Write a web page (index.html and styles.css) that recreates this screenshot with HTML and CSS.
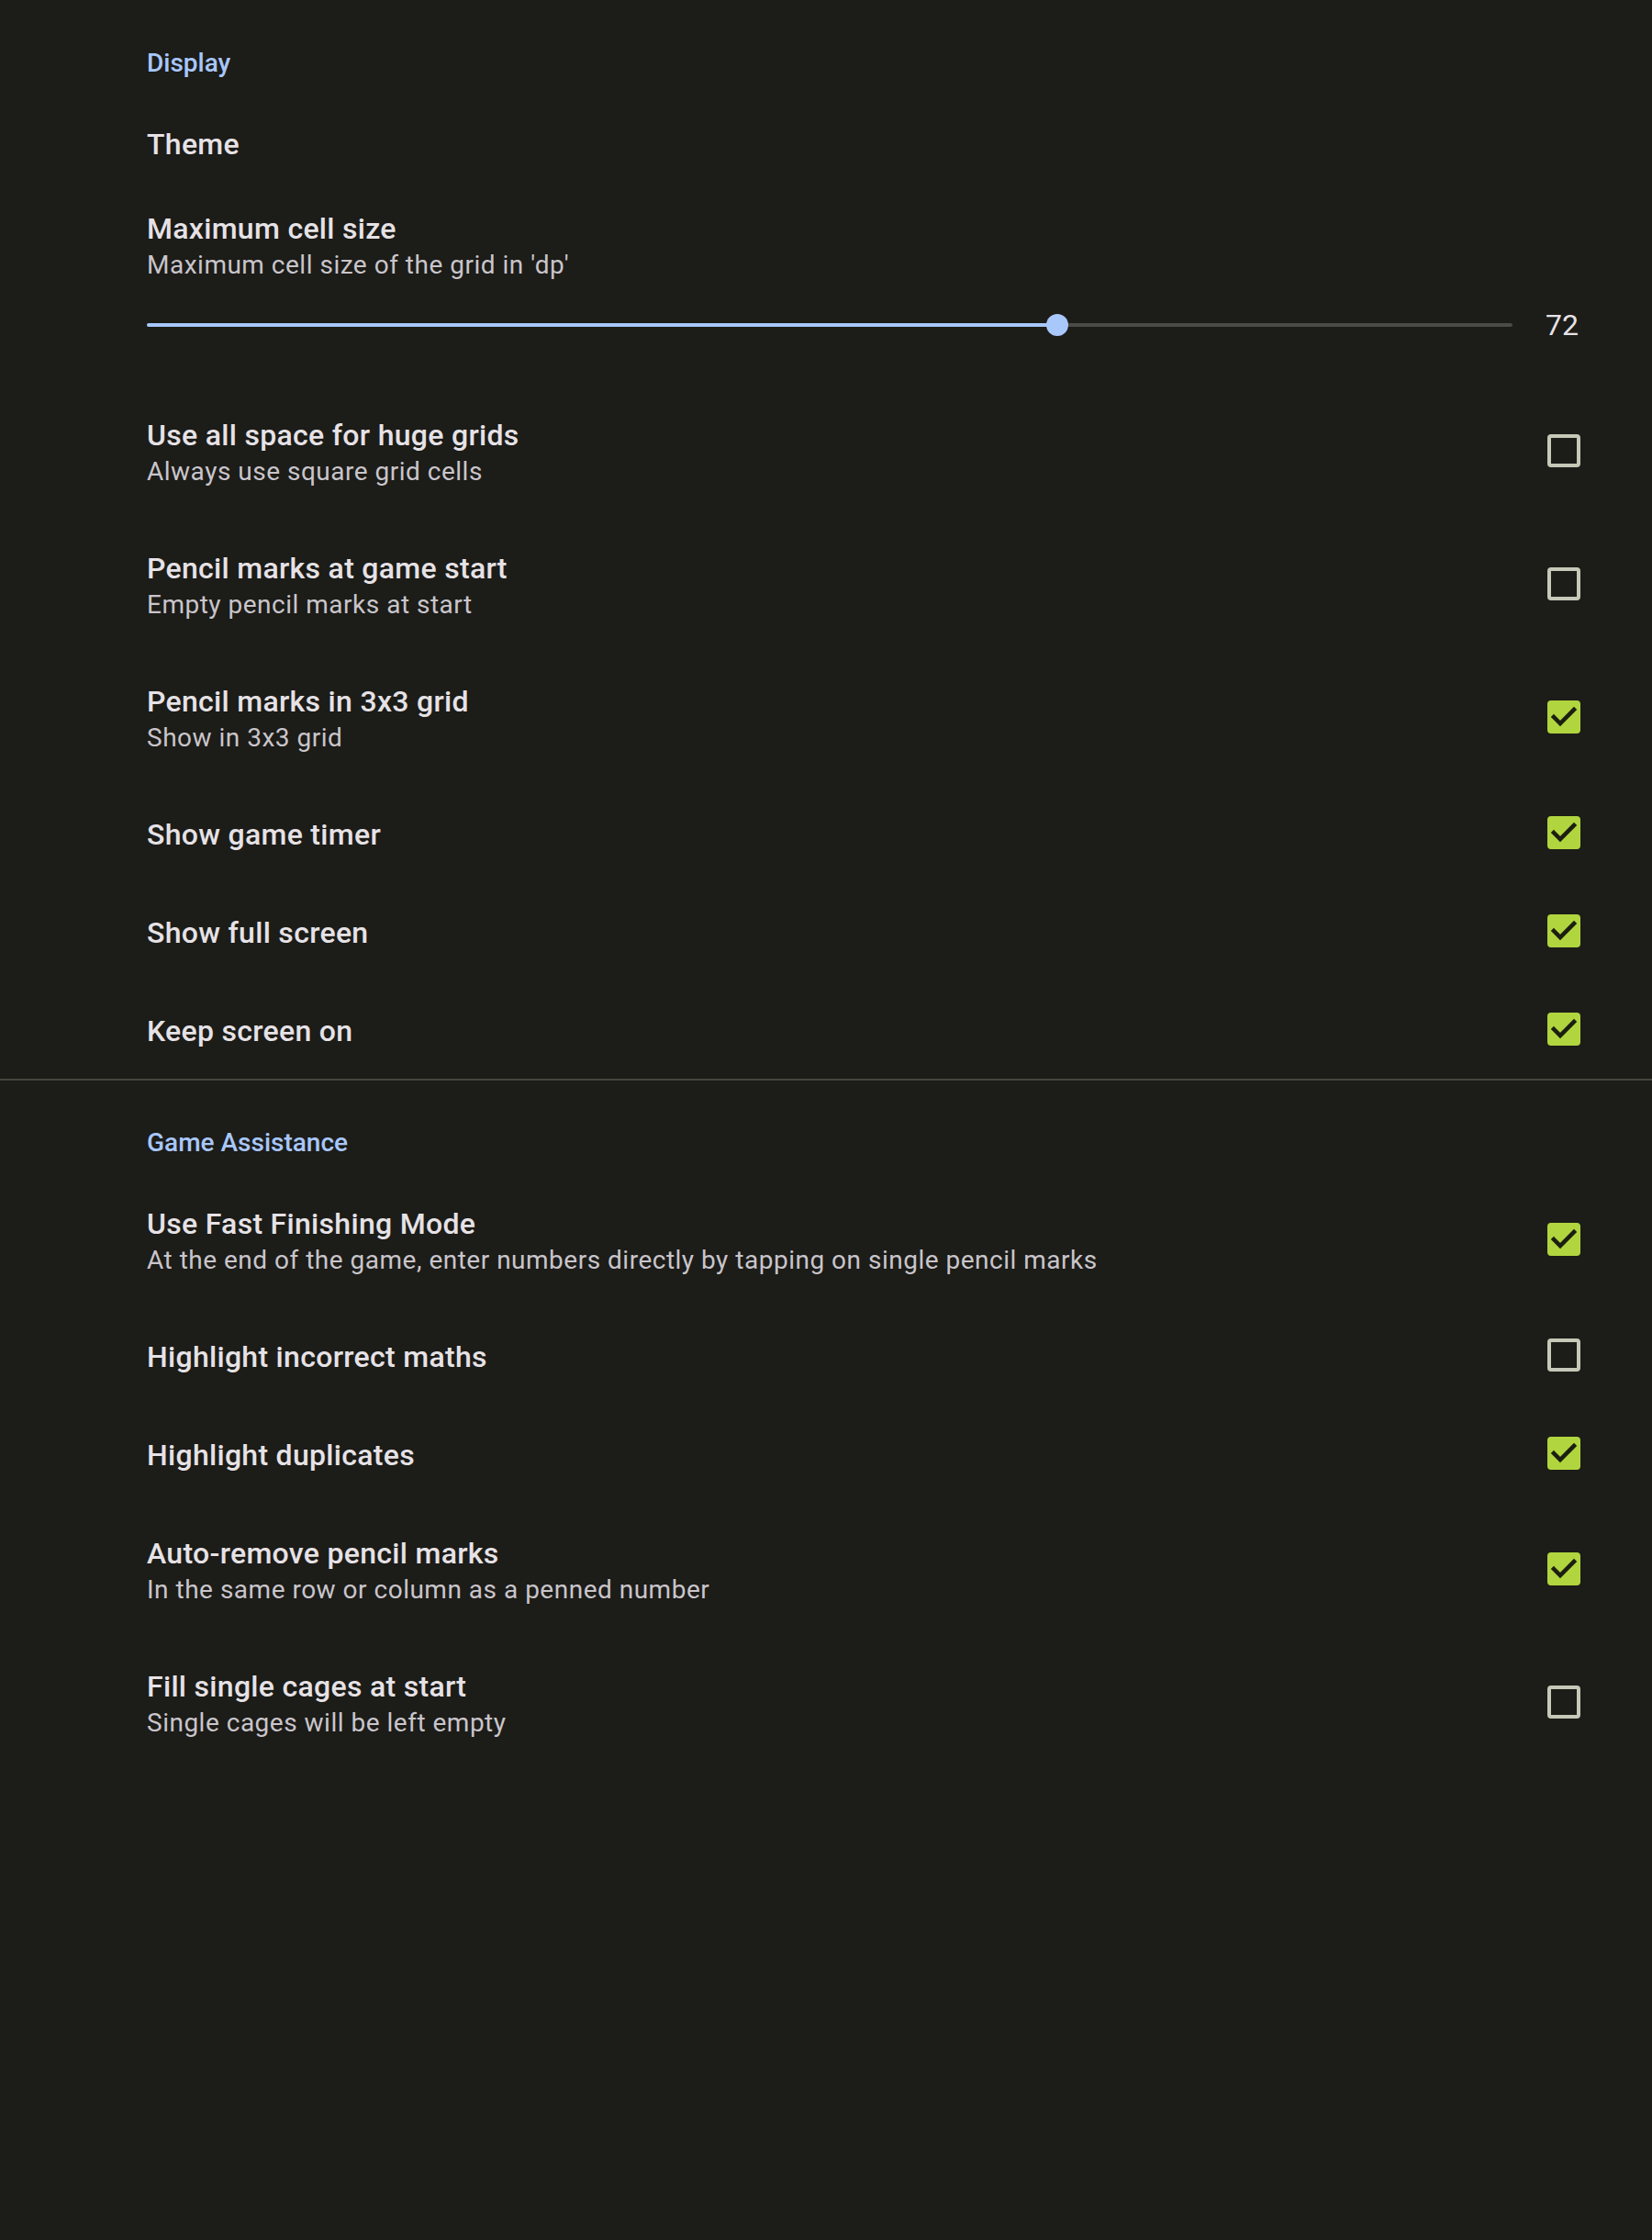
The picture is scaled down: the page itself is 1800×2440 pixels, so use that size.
FILE: index.html
```html
<!DOCTYPE html>
<html lang="en">
<head>
<meta charset="utf-8">
<title>Settings</title>
<link rel="stylesheet" href="styles.css">
</head>
<body>
<main class="settings">
  <section class="group">
    <div class="cat">Display</div>
    <div class="pref">
      <div class="text"><div class="title">Theme</div></div>
    </div>
    <div class="pref seek">
      <div class="seek-body">
        <div class="title">Maximum cell size</div>
        <div class="summary">Maximum cell size of the grid in 'dp'</div>
        <div class="seek-bar">
          <div class="track"><div class="track-fill" style="width: 66.67%"></div></div>
          <div class="seek-value">72</div>
        </div>
      </div>
    </div>
    <div class="pref">
      <div class="text"><div class="title">Use all space for huge grids</div><div class="summary">Always use square grid cells</div></div>
      <span class="cb"></span>
    </div>
    <div class="pref">
      <div class="text"><div class="title">Pencil marks at game start</div><div class="summary">Empty pencil marks at start</div></div>
      <span class="cb"></span>
    </div>
    <div class="pref">
      <div class="text"><div class="title">Pencil marks in 3x3 grid</div><div class="summary">Show in 3x3 grid</div></div>
      <span class="cb on"><svg viewBox="0 0 36 36"><polyline points="7,18 14,25 29,10"/></svg></span>
    </div>
    <div class="pref">
      <div class="text"><div class="title">Show game timer</div></div>
      <span class="cb on"><svg viewBox="0 0 36 36"><polyline points="7,18 14,25 29,10"/></svg></span>
    </div>
    <div class="pref">
      <div class="text"><div class="title">Show full screen</div></div>
      <span class="cb on"><svg viewBox="0 0 36 36"><polyline points="7,18 14,25 29,10"/></svg></span>
    </div>
    <div class="pref">
      <div class="text"><div class="title">Keep screen on</div></div>
      <span class="cb on"><svg viewBox="0 0 36 36"><polyline points="7,18 14,25 29,10"/></svg></span>
    </div>
  </section>
  <div class="divider"></div>
  <section class="group">
    <div class="cat">Game Assistance</div>
    <div class="pref">
      <div class="text"><div class="title">Use Fast Finishing Mode</div><div class="summary">At the end of the game, enter numbers directly by tapping on single pencil marks</div></div>
      <span class="cb on"><svg viewBox="0 0 36 36"><polyline points="7,18 14,25 29,10"/></svg></span>
    </div>
    <div class="pref">
      <div class="text"><div class="title">Highlight incorrect maths</div></div>
      <span class="cb"></span>
    </div>
    <div class="pref">
      <div class="text"><div class="title">Highlight duplicates</div></div>
      <span class="cb on"><svg viewBox="0 0 36 36"><polyline points="7,18 14,25 29,10"/></svg></span>
    </div>
    <div class="pref">
      <div class="text"><div class="title">Auto-remove pencil marks</div><div class="summary">In the same row or column as a penned number</div></div>
      <span class="cb on"><svg viewBox="0 0 36 36"><polyline points="7,18 14,25 29,10"/></svg></span>
    </div>
    <div class="pref">
      <div class="text"><div class="title">Fill single cages at start</div><div class="summary">Single cages will be left empty</div></div>
      <span class="cb"></span>
    </div>
  </section>
</main>
</body>
</html>
```

FILE: styles.css
```css
html, body {
  margin: 0;
  padding: 0;
  background: #1c1c18;
}
body {
  min-height: 2440px;
  font-family: Roboto, "Liberation Sans", sans-serif;
  color: #e6e2e6;
}
.settings {
  padding-top: 1px;
}
.cat {
  padding: 50px 78px 15px 160px;
  font-size: 28px;
  line-height: 36px;
  font-weight: 500;
  color: #a8c7fa;
}
.pref {
  display: flex;
  align-items: center;
  padding: 0 78px 0 160px;
}
.text {
  flex: 1;
  padding: 34px 0 31px;
  min-width: 0;
}
.title {
  font-size: 32px;
  line-height: 42px;
  font-weight: 500;
  letter-spacing: 0.3px;
  color: #e6e2e6;
}
.summary {
  font-size: 28px;
  line-height: 38px;
  font-weight: 400;
  color: #c9c5cb;
  letter-spacing: 0.5px;
}
.cb {
  flex: none;
  width: 36px;
  height: 36px;
  box-sizing: border-box;
  border: 4px solid #c6c8b8;
  border-radius: 4px;
  margin-bottom: 2px;
  margin-left: 24px;
}
.cb.on {
  background: #b1d53e;
  border-color: #b1d53e;
  position: relative;
}
.cb svg {
  position: absolute;
  left: -4px;
  top: -4px;
  width: 36px;
  height: 36px;
}
.cb polyline {
  fill: none;
  stroke: #1b1e10;
  stroke-width: 4.5;
  stroke-linecap: square;
}
.seek-body {
  flex: 1;
  padding: 19px 0 41px;
}
.seek-bar {
  display: flex;
  align-items: center;
  gap: 36px;
  height: 48px;
  margin-top: 22px;
}
.track {
  flex: 1;
  height: 4px;
  background: #4a4a46;
  border-radius: 2px;
}
.track-fill {
  position: relative;
  height: 100%;
  background: #a8c7fa;
  border-radius: 2px;
}
.track-fill::after {
  content: "";
  position: absolute;
  right: -12px;
  top: -10px;
  width: 24px;
  height: 24px;
  border-radius: 50%;
  background: #a8c7fa;
}
.seek-value {
  width: 36px;
  padding-right: 2px;
  text-align: right;
  font-size: 32px;
  line-height: 48px;
  color: #e6e2e6;
}
.divider {
  height: 2px;
  background: #46463f;
}
```
